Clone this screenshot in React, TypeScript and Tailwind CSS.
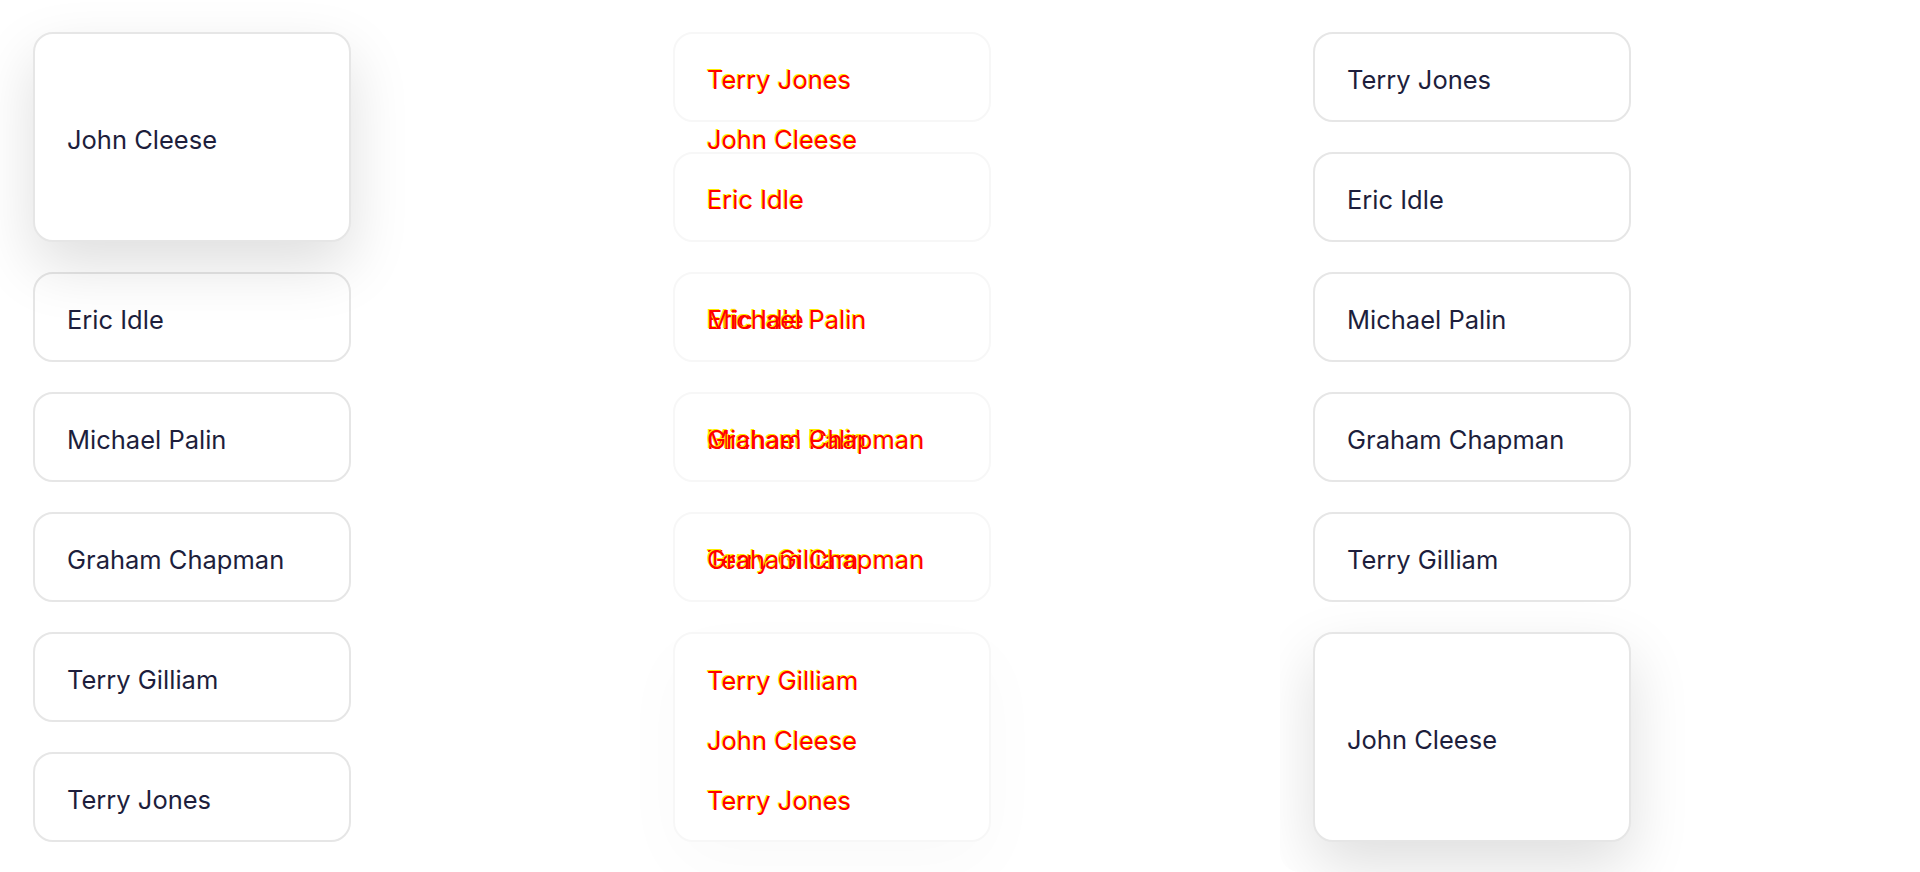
import React from "react";

const font = { fontFamily: "Inter, 'Noto Sans', sans-serif" };

const redText = "text-[#ff0000] [text-shadow:-1px_-1px_0_#ffee00]";

function Card({ name, tall, lifted }: { name: string; tall?: boolean; lifted?: boolean }) {
  return (
    <div
      className={`flex items-center px-8 pt-[5px] rounded-[20px] border-2 border-[#e6e6e6] bg-white w-[318px] shrink-0 ${
        tall ? "h-[210px]" : "h-[90px]"
      } ${lifted ? "relative z-10 shadow-[0_24px_60px_rgba(0,0,0,0.13)]" : ""}`}
    >
      <span className="text-[25.5px] text-[#1d1e3c] leading-none">{name}</span>
    </div>
  );
}

// ghost card in the middle column: faint border, red text that may overlap
function GhostCard({ lines }: { lines: { text: string; muted?: boolean }[] }) {
  return (
    <div className="flex items-center px-8 pt-[5px] rounded-[20px] border-2 border-[#f7f7f7] bg-white w-[318px] h-[90px] shrink-0">
      <div className="grid">
        {lines.map((l, i) => (
          <span
            key={i}
            className={`[grid-area:1/1] text-[25.5px] leading-none whitespace-nowrap ${
              l.muted ? "text-[#e9e9e9] [text-shadow:-1px_-1px_0_#ffee00]" : redText
            }`}
          >
            {l.text}
          </span>
        ))}
      </div>
    </div>
  );
}

export default function App() {
  return (
    <div className="flex w-[1920px] h-[872px] bg-white" style={font}>
      {/* left */}
      <div className="w-[640px] h-full overflow-hidden rounded-b-[20px] flex flex-col gap-[30px] pt-8 pl-[33px]">
        <Card name="John Cleese" tall lifted />
        <Card name="Eric Idle" />
        <Card name="Michael Palin" />
        <Card name="Graham Chapman" />
        <Card name="Terry Gilliam" />
        <Card name="Terry Jones" />
      </div>

      {/* middle */}
      <div className="w-[640px] h-full overflow-hidden rounded-b-[20px] flex flex-col gap-[30px] pt-8 pl-[33px]">
        <div className="flex flex-col px-8 pt-[16px] rounded-[20px] border-2 border-[#f7f7f7] bg-white w-[318px] h-[90px] shrink-0">
          <div className={`h-[60px] shrink-0 flex items-center text-[25.5px] leading-none ${redText}`}>Terry Jones</div>
          <div className={`h-[60px] shrink-0 flex items-center text-[25.5px] leading-none ${redText}`}>John Cleese</div>
        </div>
        <GhostCard lines={[{ text: "Eric Idle" }]} />
        <GhostCard lines={[{ text: "Eric Idle" }, { text: "Michael Palin" }]} />
        <GhostCard lines={[{ text: "Michael Palin", muted: true }, { text: "Michael Palin" }, { text: "Graham Chapman" }]} />
        <GhostCard lines={[{ text: "Terry Gilliam" }, { text: "Graham Chapman" }]} />
        <div className="flex flex-col px-8 pt-[17px] rounded-[20px] border-2 border-[#f7f7f7] bg-white w-[318px] h-[210px] shrink-0 shadow-[0_24px_70px_rgba(0,0,0,0.025)]">
          {["Terry Gilliam", "John Cleese", "Terry Jones"].map((n) => (
            <div key={n} className={`h-[60px] shrink-0 flex items-center text-[25.5px] leading-none ${redText}`}>
              {n}
            </div>
          ))}
        </div>
      </div>

      {/* right */}
      <div className="w-[640px] h-full overflow-hidden rounded-b-[20px] flex flex-col gap-[30px] pt-8 pl-[33px]">
        <Card name="Terry Jones" />
        <Card name="Eric Idle" />
        <Card name="Michael Palin" />
        <Card name="Graham Chapman" />
        <Card name="Terry Gilliam" />
        <Card name="John Cleese" tall lifted />
      </div>
    </div>
  );
}
